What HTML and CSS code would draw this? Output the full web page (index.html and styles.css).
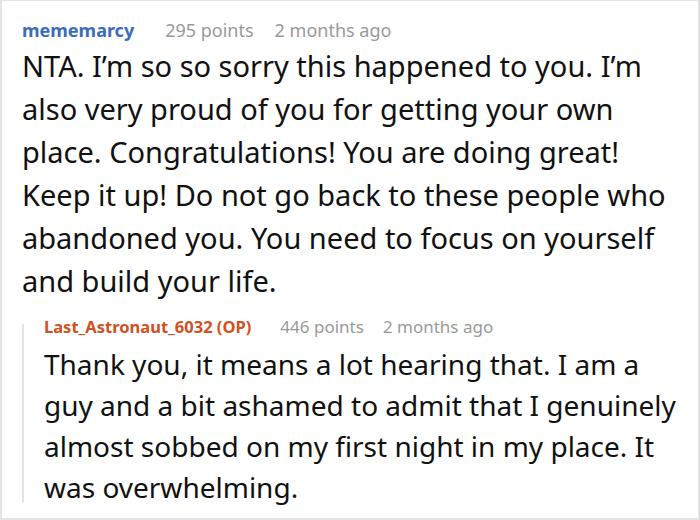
FILE: index.html
```html
<!DOCTYPE html>
<html>
<head>
<meta charset="utf-8">
<link rel="stylesheet" href="styles.css">
</head>
<body>
<div class="card">
  <div class="comment">
    <div class="meta">
      <span class="author">mememarcy</span>
      <span class="info">295 points</span>
      <span class="info">2 months ago</span>
    </div>
    <p class="text">NTA. I’m so so sorry this happened to you. I’m also very proud of you for getting your own place. Congratulations! You are doing great! Keep it up! Do not go back to these people who abandoned you. You need to focus on yourself and build your life.</p>
  </div>
  <div class="reply">
    <div class="meta">
      <span class="author op">Last_Astronaut_6032 (OP)</span>
      <span class="info">446 points</span>
      <span class="info">2 months ago</span>
    </div>
    <p class="text">Thank you, it means a lot hearing that. I am a<br>guy and a bit ashamed to admit that I genuinely<br>almost sobbed on my first night in my place. It<br>was overwhelming.</p>
  </div>
</div>
</body>
</html>
```
FILE: styles.css
```css
html, body {
  margin: 0;
  padding: 0;
  background: #fff;
}
.card {
  width: 700px;
  height: 520px;
  box-sizing: border-box;
  border: 2px solid #e4e4e4;
  border-top-width: 1px;
  padding: 17px 20px 0 20px;
  font-family: "Noto Sans", sans-serif;
  color: #111;
  overflow: hidden;
}
.meta {
  display: flex;
  gap: 21px;
  font-size: 18px;
  line-height: 24px;
  color: #999;
}
.author {
  font-weight: bold;
  color: #3a6cbc;
  margin-right: 10px;
}
.text {
  margin: 2px 0 0 0;
  font-size: 29px;
  line-height: 43px;
}
.reply {
  position: relative;
  margin-top: 13px;
  padding-left: 22px;
}
.reply::before {
  content: "";
  position: absolute;
  left: 0;
  top: 9px;
  bottom: 6px;
  width: 2px;
  background: #e4e4e4;
}
.reply .meta {
  font-size: 17px;
  gap: 19px;
}
.reply .author {
  color: #d2501f;
  font-size: 16.5px;
  margin-right: 10px;
}
.reply .text {
  font-size: 28px;
  line-height: 41px;
  margin-top: 5px;
  white-space: nowrap;
}
```
